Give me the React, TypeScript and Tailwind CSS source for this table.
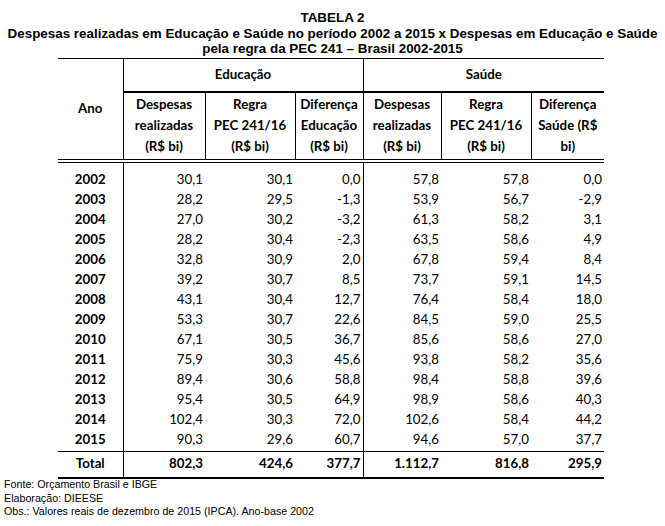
const rows: [string, string, string, string, string, string, string][] = [
  ['2002', '30,1', '30,1', '0,0', '57,8', '57,8', '0,0'],
  ['2003', '28,2', '29,5', '-1,3', '53,9', '56,7', '-2,9'],
  ['2004', '27,0', '30,2', '-3,2', '61,3', '58,2', '3,1'],
  ['2005', '28,2', '30,4', '-2,3', '63,5', '58,6', '4,9'],
  ['2006', '32,8', '30,9', '2,0', '67,8', '59,4', '8,4'],
  ['2007', '39,2', '30,7', '8,5', '73,7', '59,1', '14,5'],
  ['2008', '43,1', '30,4', '12,7', '76,4', '58,4', '18,0'],
  ['2009', '53,3', '30,7', '22,6', '84,5', '59,0', '25,5'],
  ['2010', '67,1', '30,5', '36,7', '85,6', '58,6', '27,0'],
  ['2011', '75,9', '30,3', '45,6', '93,8', '58,2', '35,6'],
  ['2012', '89,4', '30,6', '58,8', '98,4', '58,8', '39,6'],
  ['2013', '95,4', '30,5', '64,9', '98,9', '58,6', '40,3'],
  ['2014', '102,4', '30,3', '72,0', '102,6', '58,4', '44,2'],
  ['2015', '90,3', '29,6', '60,7', '94,6', '57,0', '37,7'],
]

const total = ['Total', '802,3', '424,6', '377,7', '1.112,7', '816,8', '295,9']

// column widths in px, Ano first
const widths = [65, 82, 90, 68, 78, 90, 73]

export default function App() {
  return (
    <div className="h-[526px] w-[665px] bg-white text-black">
      <div className="pt-[10px] text-center font-['Liberation_Sans',Arial,sans-serif] text-[13.4px] leading-[15.5px] font-bold">
        <div>TABELA 2</div>
        <div>Despesas realizadas em Educação e Saúde no período 2002 a 2015 x Despesas em Educação e Saúde</div>
        <div>pela regra da PEC 241 – Brasil 2002-2015</div>
      </div>

      <table className="mt-[1px] ml-[58px] table-fixed border-collapse font-['Lato',sans-serif] text-[13.3px]">
        <colgroup>
          {widths.map((w, i) => (
            <col key={i} style={{ width: w }} />
          ))}
        </colgroup>
        <thead>
          <tr className="h-[34px]">
            <th rowSpan={2} className="border-t border-r border-black font-bold">
              Ano
            </th>
            <th colSpan={3} className="border-t border-r border-b-2 border-black font-bold">
              Educação
            </th>
            <th colSpan={3} className="border-t border-b-2 border-black font-bold">
              Saúde
            </th>
          </tr>
          <tr className="h-[67px] leading-[21px] font-bold">
            <th className="border-r border-black">
              Despesas
              <br />
              realizadas
              <br />
              (R$ bi)
            </th>
            <th className="border-r border-black">
              Regra
              <br />
              PEC 241/16
              <br />
              (R$ bi)
            </th>
            <th className="border-r border-black">
              Diferença
              <br />
              Educação
              <br />
              (R$ bi)
            </th>
            <th className="border-r border-black">
              Despesas
              <br />
              realizadas
              <br />
              (R$ bi)
            </th>
            <th className="border-r border-black">
              Regra
              <br />
              PEC 241/16
              <br />
              (R$ bi)
            </th>
            <th>
              Diferença
              <br />
              Saúde (R$
              <br />
              bi)
            </th>
          </tr>
          <tr className="h-[3px]">
            <td colSpan={7} className="border-t border-b border-black p-0" />
          </tr>
        </thead>
        <tbody>
          <tr className="h-[7px]">
            <td className="border-r border-black" />
            <td />
            <td />
            <td className="border-r border-black" />
            <td />
            <td />
            <td />
          </tr>
          {rows.map((r) => (
            <tr key={r[0]} className="h-[20px] leading-[20px]">
              <td className="border-r border-black text-center font-bold">{r[0]}</td>
              <td className="pr-[2px] text-right">{r[1]}</td>
              <td className="pr-[2px] text-right">{r[2]}</td>
              <td className="border-r border-black pr-[2px] text-right">{r[3]}</td>
              <td className="pr-[2px] text-right">{r[4]}</td>
              <td className="pr-[2px] text-right">{r[5]}</td>
              <td className="pr-[2px] text-right">{r[6]}</td>
            </tr>
          ))}
          <tr className="h-[2px]">
            <td className="border-r border-black" />
            <td />
            <td />
            <td className="border-r border-black" />
            <td />
            <td />
            <td />
          </tr>
          <tr className="h-[27px] border-t border-b-2 border-black font-bold">
            <td className="border-r border-black text-center">{total[0]}</td>
            <td className="pr-[2px] text-right">{total[1]}</td>
            <td className="pr-[2px] text-right">{total[2]}</td>
            <td className="border-r border-black pr-[2px] text-right">{total[3]}</td>
            <td className="pr-[2px] text-right">{total[4]}</td>
            <td className="pr-[2px] text-right">{total[5]}</td>
            <td className="pr-[2px] text-right">{total[6]}</td>
          </tr>
        </tbody>
      </table>

      <div className="-mt-[1px] pl-[4px] font-['Liberation_Sans',Arial,sans-serif] text-[10.7px] leading-[13.5px]">
        <div>Fonte: Orçamento Brasil e IBGE</div>
        <div>Elaboração: DIEESE</div>
        <div>Obs.: Valores reais de dezembro de 2015 (IPCA). Ano-base 2002</div>
      </div>
    </div>
  )
}
